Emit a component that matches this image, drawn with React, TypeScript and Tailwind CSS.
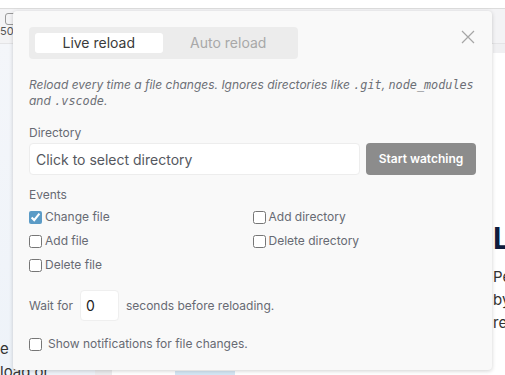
import { useState } from 'react'

const font = { fontFamily: 'Inter, "Noto Sans", sans-serif' }

function Check({ label, checked = false, gap = 'gap-[3px]' }: { label: string; checked?: boolean; gap?: string }) {
  const [on, setOn] = useState(checked)
  return (
    <label className={`flex items-center ${gap} h-[24px] text-[12px] text-[#676a73] cursor-pointer`}>
      <input
        type="checkbox"
        checked={on}
        onChange={() => setOn(!on)}
        className="m-0 w-[13px] h-[13px] accent-[#5b9bc6]"
      />
      <span>{label}</span>
    </label>
  )
}

export default function App() {
  const [tab, setTab] = useState<'live' | 'auto'>('live')

  return (
    <div className="relative w-[505px] h-[375px] overflow-hidden bg-white" style={font}>
      {/* Page behind the popup */}
      <div className="flex flex-col h-full">
        <div className="h-[9px] bg-white border-b border-[#dcdcdc]" />
        <div className="flex h-[35px] bg-[#f3f3f5] border-b border-[#e4e4e6]">
          <div className="w-[13px] flex flex-col items-start pl-[5px] pt-[4px] text-[11px] leading-[12px] text-[#555]">
            <div className="w-[12px] h-[12px] border border-[#999] rounded-[3px]" />
            <span className="-ml-[5px]">500</span>
          </div>
        </div>
        <div className="flex flex-1">
          <div className="w-[95px] bg-gradient-to-b from-[#f4f6fa] to-[#eef3f9] flex flex-col justify-end text-[15px] text-[#333] leading-[23px]">
            <span>e</span>
            <span className="-mb-[8px]">load or</span>
          </div>
          <div className="w-[17px] bg-[#ececee]" />
          <div className="flex-1 flex flex-col items-end">
            <div className="w-[12px] h-[9px] bg-[#f0f0f2]" />
            <div className="flex-1 w-[12px] pt-[170px] overflow-hidden">
              <div className="text-[30px] font-bold leading-[30px] text-[#0f1b3d]">L</div>
              <div className="mt-[12px] text-[15px] leading-[23px] text-[#333]">
                <div>Pe</div>
                <div>by</div>
                <div>re</div>
              </div>
            </div>
          </div>
        </div>
      </div>
      <div className="absolute left-[175px] bottom-0 w-[60px] h-[4px] bg-[#d4e6f4]" />

      {/* Popup */}
      <div className="absolute left-[13px] top-[11px] w-[479px] h-[359px] bg-[#f9f9f9] rounded-[4px] shadow-[0_1px_4px_rgba(0,0,0,0.18)] px-[16px] pt-[16px]">
        <div className="flex items-start justify-between">
          <div className="grid grid-cols-2 gap-[2px] w-[269px] h-[32px] p-[6px] bg-[#ececec] rounded-[4px]">
            <button
              onClick={() => setTab('live')}
              className={`rounded-[3px] text-[14px] leading-[20px] ${tab === 'live' ? 'bg-white text-[#3a3a3a]' : 'text-[#a8a8a8]'}`}
            >
              Live reload
            </button>
            <button
              onClick={() => setTab('auto')}
              className={`rounded-[3px] text-[14px] leading-[20px] ${tab === 'auto' ? 'bg-white text-[#3a3a3a]' : 'text-[#a8a8a8]'}`}
            >
              Auto reload
            </button>
          </div>
          <button className="mt-[3px] mr-[1px] text-[#a6a6a6]">
            <svg width="14" height="14" viewBox="0 0 14 14" fill="none" stroke="currentColor" strokeWidth="1.2">
              <path d="M1 1L13 13M13 1L1 13" />
            </svg>
          </button>
        </div>

        <p className="mt-[18px] text-[12px] leading-[15px] italic text-[#6c6f76]">
          Reload every time a file changes. Ignores directories like{' '}
          <code className="font-['DejaVu_Sans_Mono',monospace] text-[11.8px]">.git</code>,{' '}
          <code className="font-['DejaVu_Sans_Mono',monospace] text-[11.8px]">node_modules</code> and{' '}
          <code className="font-['DejaVu_Sans_Mono',monospace] text-[11.8px]">.vscode</code>.
        </p>

        <div className="mt-[16px] text-[12px] leading-[16px] text-[#676a73]">Directory</div>
        <div className="mt-[2px] flex gap-[6px]">
          <div className="flex-1 h-[32px] bg-white border border-[#ededed] rounded-[4px] flex items-center px-[6px] text-[14px] text-[#555860]">
            Click to select directory
          </div>
          <button className="w-[110px] h-[32px] bg-[#8c8c8c] rounded-[4px] text-white text-[12px] font-semibold">
            Start watching
          </button>
        </div>

        <div className="mt-[12px] text-[12px] leading-[16px] text-[#676a73]">Events</div>
        <div className="mt-[2px] grid grid-cols-2">
          <Check label="Change file" checked />
          <Check label="Add directory" />
          <Check label="Add file" />
          <Check label="Delete directory" />
          <Check label="Delete file" />
        </div>

        <div className="mt-[13px] flex items-center gap-[7px] text-[12px] text-[#676a73]">
          <span>Wait for</span>
          <div className="w-[39px] h-[31px] bg-white rounded-[4px] border border-[#efefef] flex items-center px-[5px] text-[14px] text-[#222]">
            0
          </div>
          <span>seconds before reloading.</span>
        </div>

        <div className="mt-[11px]">
          <Check label="Show notifications for file changes." gap="gap-[6px]" />
        </div>
      </div>
    </div>
  )
}
